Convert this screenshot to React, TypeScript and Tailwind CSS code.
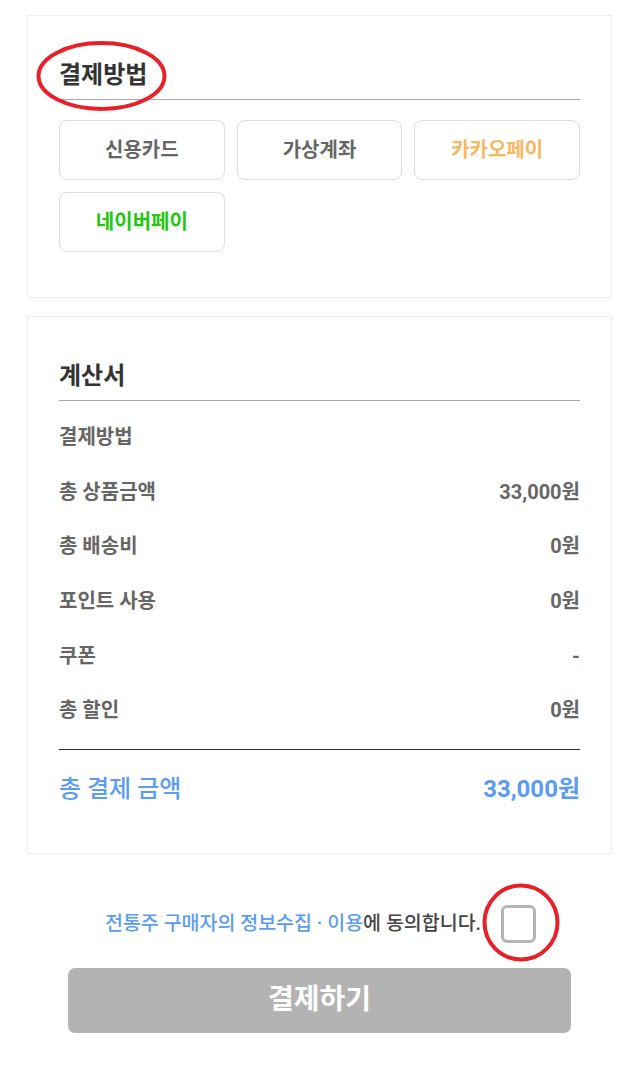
import React from "react";

const FONT = "font-['Roboto','Noto_Sans_CJK_KR',sans-serif]";

function PayButton({ label, color }: { label: string; color: string }) {
  return (
    <div
      className={`h-[60px] rounded-[8px] border border-[#dddddd] bg-white flex items-center justify-center text-[20px] leading-[24px] font-bold ${color}`}
    >
      {label}
    </div>
  );
}

function Row({ label, value }: { label: string; value?: string }) {
  return (
    <div className="h-[54.6px] flex items-center justify-between text-[20px] leading-[24px] font-semibold text-[#666666]">
      <span>{label}</span>
      {value ? <span className="font-bold">{value}</span> : null}
    </div>
  );
}

export default function App() {
  return (
    <div className={`relative w-[632px] min-h-[1065px] bg-white ${FONT}`}>
      <div className="pt-[15px] pl-[27px] w-[612px]">
        {/* Card 1: 결제방법 */}
        <div className="border border-[#eeeeee] px-[31px] pt-[44px] pb-[45px]">
          <div className="h-[30px] leading-[30px] text-[24px] font-bold text-[#333333]">
            결제방법
          </div>
          <div className="mt-[9px] border-b border-[#aaaaaa]" />
          <div className="mt-[20px] grid grid-cols-3 gap-[12px]">
            <PayButton label="신용카드" color="text-[#666666]" />
            <PayButton label="가상계좌" color="text-[#666666]" />
            <PayButton label="카카오페이" color="text-[#f8b862]" />
            <PayButton label="네이버페이" color="text-[#22c80e]" />
          </div>
        </div>

        {/* Card 2: 계산서 */}
        <div className="mt-[18px] border border-[#eeeeee] px-[31px] pt-[44px] pb-[49px]">
          <div className="h-[30px] leading-[30px] text-[24px] font-bold text-[#333333]">
            계산서
          </div>
          <div className="mt-[9px] border-b border-[#aaaaaa]" />
          <div className="pt-[9px]">
            <Row label="결제방법" />
            <Row label="총 상품금액" value="33,000원" />
            <Row label="총 배송비" value="0원" />
            <Row label="포인트 사용" value="0원" />
            <Row label="쿠폰" value="-" />
            <Row label="총 할인" value="0원" />
          </div>
          <div className="mt-[11px] border-b border-[#333333]" />
          <div className="mt-[24px] h-[30px] flex items-center justify-between text-[#5b9cf3]">
            <span className="text-[24px] font-medium">총 결제 금액</span>
            <span className="text-[24px] font-bold">33,000원</span>
          </div>
        </div>

        {/* Agreement */}
        <div className="mt-[51px] h-[38px] flex items-center justify-center gap-[20px] pl-[2px]">
          <span className="text-[19.5px] font-medium text-[#444444]">
            <span className="text-[#5b9cf3]">전통주 구매자의 정보수집 · 이용</span>에 동의합니다.
          </span>
          <div className="w-[35px] h-[38px] rounded-[6px] border-[3px] border-[#b5b5b5] bg-white" />
        </div>

        <div className="mx-[41px] mt-[25px] h-[65px] rounded-[7px] bg-[#b3b3b3] flex items-center justify-center text-white text-[28px] font-bold">
          결제하기
        </div>
      </div>

      {/* red annotation marks */}
      <svg
        className="absolute left-0 top-0 pointer-events-none"
        width="632"
        height="1065"
        viewBox="0 0 632 1065"
      >
        <ellipse cx="101.5" cy="76" rx="63" ry="33" fill="none" stroke="#e8202a" strokeWidth="4" />
        <ellipse cx="521" cy="922.5" rx="36.5" ry="37" fill="none" stroke="#e8202a" strokeWidth="4" />
      </svg>
    </div>
  );
}
